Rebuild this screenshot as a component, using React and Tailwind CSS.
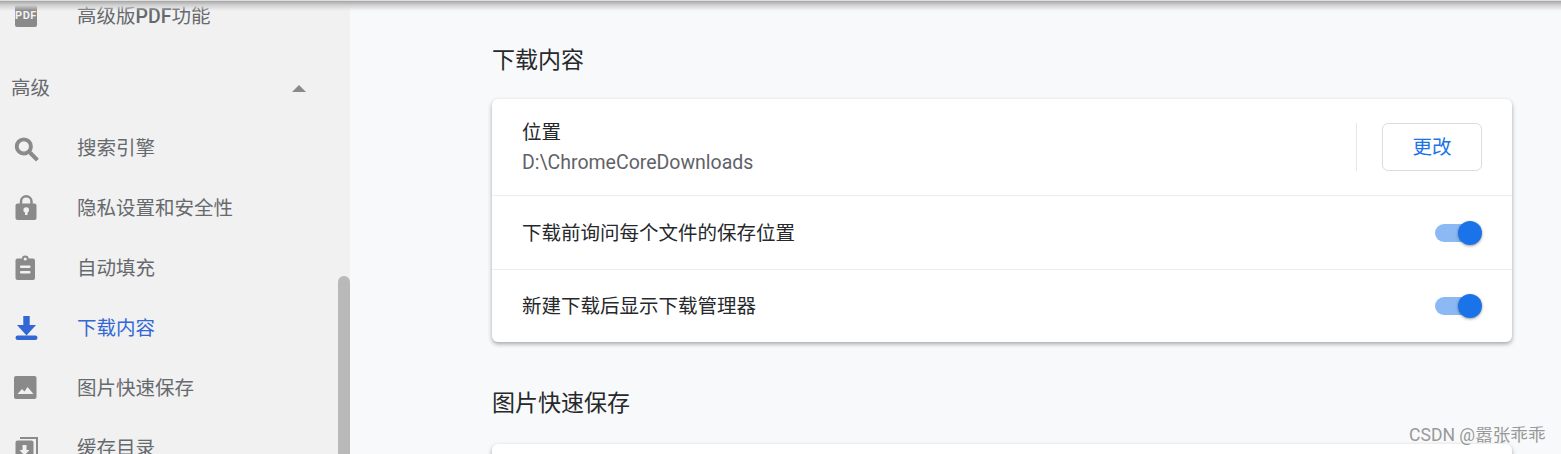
import React from "react";

const FONT = "font-['Roboto','Noto_Sans_CJK_SC',sans-serif]";

const IconBox = ({ children, color = "#8a8a8a" }) => (
  <svg width="30" height="30" viewBox="0 0 30 30" fill={color} className="shrink-0 overflow-visible">
    {children}
  </svg>
);

const SearchIcon = () => (
  <IconBox>
    <path
      transform="translate(0.6 1.2) scale(1.286)"
      stroke="#8a8a8a"
      strokeWidth="1"
      d="M15.5 14h-.79l-.28-.27C15.41 12.59 16 11.11 16 9.5 16 5.91 13.09 3 9.5 3S3 5.91 3 9.5 5.91 16 9.5 16c1.61 0 3.09-.59 4.23-1.57l.27.28v.79l5 4.99L20.49 19l-4.99-5zm-6 0C7.01 14 5 11.99 5 9.5S7.01 5 9.5 5 14 7.01 14 9.5 11.99 14 9.5 14z"
    />
  </IconBox>
);

const LockIcon = () => (
  <IconBox>
    <path d="M10 11V8.5a5.2 5.2 0 0 1 10.5 0V11" fill="none" stroke="#8a8a8a" strokeWidth="2.5" />
    <rect x="4.5" y="10.5" width="21" height="16.5" rx="2" />
    <circle cx="15.2" cy="17" r="2.8" fill="#f1f1f1" />
    <rect x="14" y="17" width="2.5" height="5" fill="#f1f1f1" />
  </IconBox>
);

const ClipboardIcon = () => (
  <IconBox>
    <rect x="4.5" y="5.5" width="19.5" height="21.5" rx="2" />
    <circle cx="14.25" cy="5.8" r="3.4" />
    <circle cx="14.25" cy="6" r="1.6" fill="#f1f1f1" />
    <rect x="9" y="12.5" width="10.5" height="2.5" rx="1" fill="#f1f1f1" />
    <rect x="9" y="18" width="10.5" height="2.5" rx="1" fill="#f1f1f1" />
  </IconBox>
);

const DownloadIcon = () => (
  <IconBox color="#3367d6">
    <path d="M12.3 3h6.4v9H25L15.5 22.5 6 12h6.3z" />
    <rect x="4.5" y="22.5" width="22" height="4.5" rx="2.2" />
  </IconBox>
);

const ImageIcon = () => (
  <IconBox>
    <rect x="3" y="3" width="22.5" height="23" rx="2" />
    <path d="M6.5 21l4.5-5 2.5 2.5 3-4.5 6 7z" fill="#f1f1f1" />
  </IconBox>
);

const CacheIcon = () => (
  <IconBox>
    <path d="M9 5h17v20" fill="none" stroke="#8a8a8a" strokeWidth="2" />
    <rect x="4.5" y="7.5" width="18" height="24" rx="2" />
    <path d="M11.5 12h4v5h3l-5 5.5-5-5.5h3z" fill="#f1f1f1" />
  </IconBox>
);

const NavItem = ({ icon, label, active }) => (
  <div className={`flex h-[60px] items-center gap-9 pl-[11px] text-[19.5px] ${active ? "text-[#3367d6]" : "text-[#666a6e]"}`}>
    {icon}
    <span className="pt-[2px]">{label}</span>
  </div>
);

const Toggle = () => (
  <div className="flex w-[47px] items-center">
    <div className="h-[18px] w-[40px] rounded-full bg-[#8cb9f3]" />
    <div className="-ml-[33px] relative left-[16px] h-6 w-6 rounded-full bg-[#1a73e8] shadow-[0_1px_3px_rgba(0,0,0,0.4)]" />
  </div>
);

const ToggleRow = ({ label, className = "" }) => (
  <div className={`flex items-center justify-between px-[30px] ${className}`}>
    <span className="pt-[2px] text-[19.5px] text-[#26282b]">{label}</span>
    <Toggle />
  </div>
);

export default function App() {
  return (
    <div className={`${FONT} relative flex h-[454px] w-[1561px] overflow-hidden bg-[#f8f9fa]`}>
      {/* top shadow */}
      <div className="absolute inset-x-0 top-0 z-10 h-[11px] border-t border-[#dedede] bg-gradient-to-b from-[#a6a6a6] via-[#d0d0d0] via-40% to-transparent" />

      {/* sidebar */}
      <aside className="relative w-[350px] shrink-0 bg-[#f1f1f1]">
        <div className="-mt-[14px]">
          <div className="flex h-[60px] items-center gap-9 pl-[11px] text-[19.5px] text-[#666a6e]">
            <IconBox>
              <foreignObject x="4" y="4" width="22" height="22">
                <div className="flex h-[22px] w-[22px] items-center justify-center rounded-[2px] bg-[#8a8a8a] text-[11px] font-bold tracking-[0.5px] text-[#f1f1f1]">
                  PDF
                </div>
              </foreignObject>
            </IconBox>
            <span className="pt-[2px]">
              高级版<span className="font-medium">PDF</span>功能
            </span>
          </div>

          <div className="mt-[12px] flex h-[60px] items-center justify-between pl-[11px] pr-[44px] text-[19.5px] text-[#666a6e]">
            <span className="pt-[2px]">高级</span>
            <svg width="14" height="7" viewBox="0 0 14 7" fill="#8a8a8a">
              <path d="M7 0l7 7H0z" />
            </svg>
          </div>

          <NavItem icon={<SearchIcon />} label="搜索引擎" />
          <NavItem icon={<LockIcon />} label="隐私设置和安全性" />
          <NavItem icon={<ClipboardIcon />} label="自动填充" />
          <NavItem icon={<DownloadIcon />} label="下载内容" active />
          <NavItem icon={<ImageIcon />} label="图片快速保存" />
          <NavItem icon={<CacheIcon />} label="缓存目录" />
        </div>

        {/* scrollbar */}
        <div className="absolute right-0 top-[276px] h-[190px] w-3 rounded-t-[6px] bg-[#b9b9b9]" />
      </aside>

      {/* main */}
      <main className="w-[1020px] shrink-0 ml-[142px]">
        <h2 className="mt-[44px] h-[32px] text-[23px] font-normal leading-[34px] text-[#26282b]">下载内容</h2>

        <section className="mt-[23px] rounded-[6px] bg-white shadow-[0_2px_4px_rgba(60,64,67,0.45)]">
          <div className="flex h-[96px] items-center px-[30px]">
            <div className="flex-1 pt-[2px]">
              <div className="text-[19.5px] leading-[30px] text-[#26282b]">位置</div>
              <div className="text-[19.5px] leading-[30px] text-[#5f6368]">D:\ChromeCoreDownloads</div>
            </div>
            <div className="h-[48px] w-px bg-[#e8e8e8]" />
            <button className="ml-[25px] h-[48px] w-[100px] rounded-[6px] border border-[#dadce0] bg-white pt-[2px] text-[19.5px] text-[#1a73e8]">
              更改
            </button>
          </div>
          <ToggleRow label="下载前询问每个文件的保存位置" className="h-[74px] border-t border-[#ededed]" />
          <ToggleRow label="新建下载后显示下载管理器" className="h-[73px] border-t border-[#ededed]" />
        </section>

        <h2 className="mt-[45px] h-[33px] text-[23px] font-normal leading-[34px] text-[#26282b]">图片快速保存</h2>

        <section className="mt-[24px] h-[60px] rounded-[6px] bg-white shadow-[0_2px_4px_rgba(60,64,67,0.45)]" />
      </main>

      {/* watermark */}
      <div className="absolute left-[1409px] top-[424px] z-20 text-[17.6px] leading-[22px] text-[#999]">CSDN @嚣张乖乖</div>
    </div>
  );
}
